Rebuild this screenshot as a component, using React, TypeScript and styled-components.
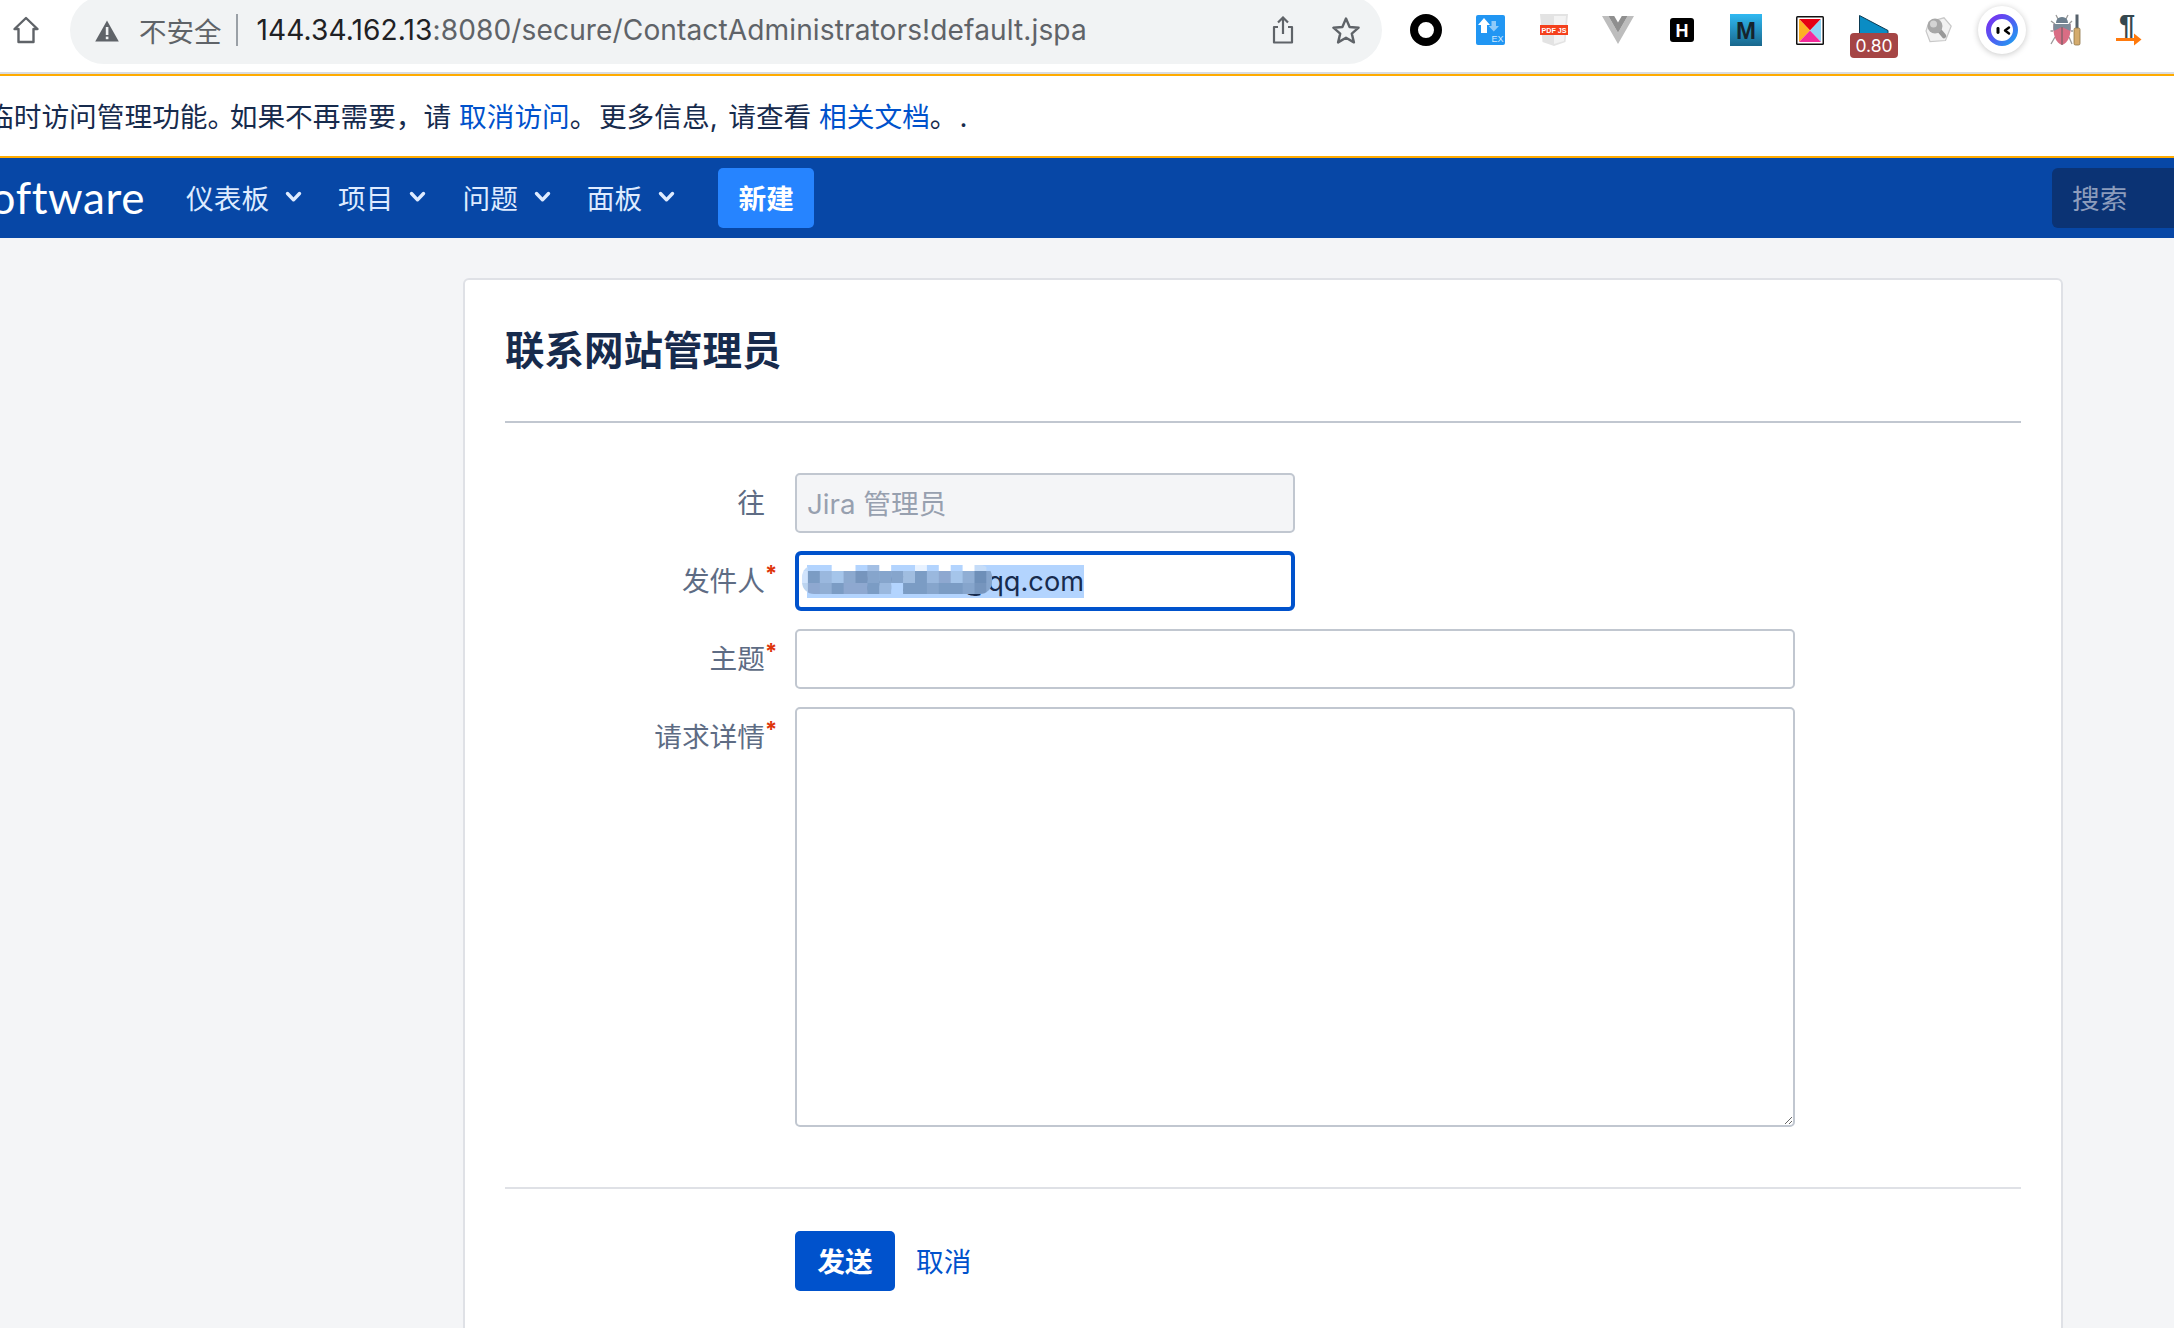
import React from "react";
import styled, { createGlobalStyle } from "styled-components";

const FONT = `Inter, "Noto Sans CJK SC", "Noto Sans", sans-serif`;

const Global = createGlobalStyle`
  html, body { margin: 0; padding: 0; background: #f4f5f7; }
  body { font-family: ${FONT}; font-size: 27.7px; color: #172b4d; overflow: hidden; }
  * { box-sizing: border-box; }
`;

const Page = styled.div`
  width: 2174px;
  height: 1328px;
  overflow: hidden;
  display: flex;
  flex-direction: column;
`;

const Toolbar = styled.div`
  flex: none;
  height: 74px;
  background: #fff;
  border-bottom: 2px solid #dadce0;
  display: flex;
  align-items: flex-start;
`;

const HomeSlot = styled.div`
  width: 70px;
  height: 60px;
  padding-left: 13px;
  display: flex;
  align-items: center;
`;

const Omnibox = styled.div`
  width: 1312px;
  height: 68px;
  margin-top: -4px;
  padding: 0 21px 0 25px;
  border-radius: 34px;
  background: #f1f3f4;
  display: flex;
  align-items: center;
`;

const WarningSlot = styled.span`
  display: flex;
  margin-top: 2px;
`;

const Insecure = styled.span`
  margin-left: 20px;
  font-size: 27.5px;
  color: #5f6368;
  white-space: nowrap;
`;

const Separator = styled.span`
  width: 2px;
  height: 32px;
  margin: 0 19px 0 14px;
  background: #9aa0a6;
`;

const Url = styled.span`
  font-size: 28.1px;
  letter-spacing: 0.1px;
  color: #5f6368;
  white-space: nowrap;
  flex: 1;
`;

const Host = styled.span`
  color: #202124;
`;

const OmniIcon = styled.span<{ $gap: number }>`
  display: flex;
  margin-left: ${(p) => p.$gap}px;
`;

const Extensions = styled.div`
  margin-left: 12px;
  display: flex;
  height: 60px;
`;

const Ext = styled.div`
  width: 64px;
  height: 60px;
  display: flex;
  align-items: center;
  justify-content: center;
  position: relative;
`;

const TriangleSlot = styled.span`
  display: flex;
  margin-bottom: 10px;
`;

const Badge = styled.span`
  position: absolute;
  left: 8px;
  top: 33px;
  width: 48px;
  height: 25px;
  border-radius: 4px;
  background: #a54545;
  color: #fff;
  font-size: 17.5px;
  line-height: 25px;
  text-align: center;
`;

const FaceBubble = styled.div`
  width: 48px;
  height: 48px;
  border-radius: 50%;
  background: #fff;
  box-shadow: 0 1px 6px rgba(0, 0, 0, 0.22);
  display: flex;
  align-items: center;
  justify-content: center;
`;

const Banner = styled.div`
  flex: none;
  height: 84px;
  background: #fff;
  border-top: 2px solid #ffab00;
  border-bottom: 2px solid #ffab00;
  display: flex;
  align-items: center;
  white-space: nowrap;
`;

const BannerText = styled.div`
  margin-left: -14px;
  padding-bottom: 3px;
  color: #172b4d;
`;

const Kern = styled.span<{ $by: number }>`
  letter-spacing: ${(p) => p.$by}px;
`;

const Link = styled.a`
  color: #0052cc;
  text-decoration: none;
`;

const Nav = styled.div`
  flex: none;
  height: 80px;
  background: #0747a6;
  display: flex;
  align-items: center;
`;

const Logo = styled.div`
  width: 145px;
  padding-bottom: 2px;
  overflow: hidden;
  display: flex;
  justify-content: flex-end;
  white-space: nowrap;
  color: #fff;
  font-family: Lato, sans-serif;
  font-size: 44px;
  letter-spacing: 0.6px;
`;

const NavItem = styled.div<{ $first?: boolean }>`
  margin-left: ${(p) => (p.$first ? 41 : 36)}px;
  padding-bottom: 3px;
  display: flex;
  align-items: center;
  gap: 16px;
  color: #deebff;
`;

const CreateButton = styled.div`
  margin-left: 43px;
  width: 96px;
  height: 60px;
  padding-bottom: 3px;
  border-radius: 5px;
  background: #2684ff;
  color: #fff;
  font-weight: 700;
  display: flex;
  align-items: center;
  justify-content: center;
`;

const Search = styled.div`
  margin-left: auto;
  width: 122px;
  height: 60px;
  padding: 0 0 2px 20px;
  border-radius: 6px 0 0 6px;
  background: #0b3374;
  color: #8c9cbc;
  display: flex;
  align-items: center;
`;

const Main = styled.div`
  flex: none;
  padding: 40px 0 0 463px;
`;

const Card = styled.div`
  width: 1600px;
  height: 1200px;
  padding: 41px 40px 40px;
  background: #fff;
  border: 2px solid #dfe1e6;
  border-radius: 6px;
`;

const Title = styled.h1`
  margin: 0;
  font-size: 39.5px;
  line-height: 60px;
  font-weight: 700;
  color: #172b4d;
`;

const Rule = styled.hr<{ $light?: boolean }>`
  margin: ${(p) => (p.$light ? 60 : 40)}px 0 0;
  height: 2px;
  border: 0;
  background: ${(p) => (p.$light ? "#dfe1e6" : "#c1c7d0")};
`;

const Form = styled.div`
  margin-top: 50px;
  display: flex;
  flex-direction: column;
  gap: 18px;
`;

const Row = styled.div`
  display: grid;
  grid-template-columns: 260px 1fr;
  column-gap: 30px;
  align-items: start;
`;

const Label = styled.label`
  justify-self: end;
  position: relative;
  line-height: 60px;
  color: #5e6c84;
`;

const Star = styled.span`
  position: absolute;
  left: 100%;
  top: -8px;
  color: #de350b;
  font-size: 22px;
  font-weight: 700;
`;

const TextField = styled.input<{ $width: number }>`
  display: block;
  width: ${(p) => p.$width}px;
  height: 60px;
  padding: 0 10px 3px;
  border: 2px solid #c1c7d0;
  border-radius: 5px;
  background: #fff;
  font: inherit;
  color: #172b4d;
  outline: none;
  &:disabled {
    background: #f4f5f7;
    color: #97a0af;
    opacity: 1;
  }
`;

const FocusedField = styled.div`
  position: relative;
  width: 500px;
  height: 60px;
  padding: 0 8px;
  border: 4px solid #0052cc;
  border-radius: 6px;
  display: flex;
  align-items: center;
`;

const Selection = styled.span`
  display: flex;
  justify-content: flex-end;
  width: 277px;
  height: 33px;
  overflow: hidden;
  white-space: nowrap;
  line-height: 33px;
  font-size: 27.2px;
  background: #b3d4fe;
  color: #172b4d;
`;

const SelectedValue = styled.span`
  flex: none;
`;

const Mosaic = styled.svg`
  position: absolute;
  left: 3px;
  top: 10px;
`;

const TextArea = styled.textarea`
  display: block;
  width: 1000px;
  height: 420px;
  padding: 8px 10px;
  border: 2px solid #c1c7d0;
  border-radius: 5px;
  background: #fff;
  font: inherit;
  outline: none;
  resize: vertical;
`;

const Actions = styled.div`
  margin-top: 42px;
  padding-left: 290px;
  display: flex;
  align-items: center;
`;

const SendButton = styled.button`
  width: 100px;
  height: 60px;
  padding: 0 0 3px;
  border: 0;
  border-radius: 5px;
  background: #0052cc;
  color: #fff;
  font: inherit;
  font-weight: 700;
`;

const CancelLink = styled(Link)`
  margin-left: 21px;
  padding-bottom: 3px;
`;

const Chevron = () => (
  <svg width="17" height="12" viewBox="0 0 17 12">
    <path d="M2.5 2.5 L8.5 8.8 L14.5 2.5" fill="none" stroke="#deebff" strokeWidth="3.4" strokeLinecap="round" strokeLinejoin="round" />
  </svg>
);

const HomeIcon = () => (
  <svg width="26" height="28" viewBox="0 0 26 28">
    <path d="M13 2 L24.5 13 H20.5 V26 H5.5 V13 H1.5 Z" fill="none" stroke="#5f6368" strokeWidth="2.4" strokeLinejoin="round" />
  </svg>
);

const WarningIcon = () => (
  <svg width="24" height="22" viewBox="0 0 24 22">
    <path d="M12 0.5 L23.8 21.5 H0.2 Z" fill="#5f6368" />
    <rect x="10.8" y="7" width="2.6" height="8" fill="#f1f3f4" />
    <rect x="10.8" y="16.6" width="2.6" height="2.6" fill="#f1f3f4" />
  </svg>
);

const ShareIcon = () => (
  <svg width="22" height="28" viewBox="0 0 22 28">
    <path d="M6 11 H2 V26.5 H20 V11 H16" fill="none" stroke="#5f6368" strokeWidth="2.2" strokeLinejoin="round" />
    <path d="M11 18 V2 M6 6.5 L11 1.5 L16 6.5" fill="none" stroke="#5f6368" strokeWidth="2.2" />
  </svg>
);

const StarIcon = () => (
  <svg width="30" height="28" viewBox="0 0 30 28">
    <path d="M15 2.5 L18.6 11 L27.6 11.7 L20.8 17.6 L22.9 26.4 L15 21.7 L7.1 26.4 L9.2 17.6 L2.4 11.7 L11.4 11 Z" fill="none" stroke="#5f6368" strokeWidth="2.4" strokeLinejoin="round" />
  </svg>
);

const RingIcon = () => (
  <svg width="32" height="32" viewBox="0 0 32 32">
    <circle cx="16" cy="16" r="12" fill="none" stroke="#000" strokeWidth="8" />
  </svg>
);

const ExIcon = () => (
  <svg width="29" height="30" viewBox="0 0 29 30">
    <rect width="29" height="30" rx="2" fill="#2196f3" />
    <path d="M8 3 L14 10 H11 V18 H5 V10 H2 Z" fill="#fff" />
    <path d="M15.5 6 H20 V11 H23 L17.8 16.5 L12.6 11 H15.5 Z" fill="#90caf9" />
    <text x="15.5" y="27" fontSize="9" fill="#cfe8fc" fontFamily="Liberation Sans, sans-serif">EX</text>
  </svg>
);

const PdfIcon = () => (
  <svg width="28" height="32" viewBox="0 0 28 32">
    <path d="M0 0 H28 L25.5 28 L14 32 L2.5 28 Z" fill="#e3e3e3" />
    <path d="M14 2 H26 L24 27 L14 30 Z" fill="#f3f3f3" />
    <rect y="11" width="28" height="10" fill="#f4401c" />
    <text x="14" y="18.7" fontSize="7.2" fontWeight="700" textAnchor="middle" fill="#fff" fontFamily="Liberation Sans, sans-serif">PDF JS</text>
  </svg>
);

const VueIcon = () => (
  <svg width="32" height="28" viewBox="0 0 32 28">
    <path d="M0 0 L16 28 L32 0 H25.6 L16 16.8 L6.4 0 Z" fill="#bdbdbd" />
    <path d="M6.4 0 L16 16.8 L25.6 0 H19.8 L16 6.6 L12.2 0 Z" fill="#8f8f8f" />
  </svg>
);

const HIcon = () => (
  <svg width="24" height="24" viewBox="0 0 24 24">
    <rect width="24" height="24" rx="3" fill="#000" />
    <text x="12" y="19" fontSize="18" fontWeight="700" textAnchor="middle" fill="#fff" fontFamily="Liberation Sans, sans-serif">H</text>
  </svg>
);

const MIcon = () => (
  <svg width="32" height="32" viewBox="0 0 32 32">
    <defs>
      <linearGradient id="mGrad" x1="0" y1="0" x2="0" y2="1">
        <stop offset="0" stopColor="#2fb9f2" />
        <stop offset="1" stopColor="#19678c" />
      </linearGradient>
    </defs>
    <rect width="32" height="32" fill="url(#mGrad)" />
    <text x="16" y="25" fontSize="24" fontWeight="700" textAnchor="middle" fill="#16242c" fontFamily="Liberation Sans, sans-serif">M</text>
  </svg>
);

const XIcon = () => (
  <svg width="28" height="29" viewBox="0 0 28 29">
    <rect width="28" height="29" fill="#111" rx="1.5" />
    <rect x="1.5" y="1.5" width="25" height="26" fill="#fff" />
    <path d="M3 3 H25 L14 14.5 Z" fill="#e60012" />
    <path d="M3 3 L14 14.5 L3 26 Z" fill="#fdb022" />
    <path d="M25 3 L14 14.5 L25 26 Z" fill="#8fd3f4" />
    <path d="M3 26 H25 L14 14.5 Z" fill="#f32a9b" />
  </svg>
);

const TriangleIcon = () => (
  <svg width="30" height="20" viewBox="0 0 30 20">
    <path d="M0.5 0.5 L29 15.5 L29 20 H0.5 Z" fill="#0a8cc4" stroke="#0b3a52" strokeWidth="1" />
  </svg>
);

const MagnifierIcon = () => (
  <svg width="27" height="26" viewBox="0 0 27 26">
    <path d="M4 5 L19 0.8 L26.2 9 L20.5 23.5 L5 24.5 L1 14 Z" fill="#f2f2f2" stroke="#c8c8c8" strokeWidth="1.2" />
    <path d="M14 13 L19 19" stroke="#999" strokeWidth="4.5" strokeLinecap="round" />
    <circle cx="10" cy="9" r="7.5" fill="#a8a8a8" />
    <circle cx="8.5" cy="7" r="3.5" fill="#d4d4d4" />
  </svg>
);

const FaceIcon = () => (
  <svg width="32" height="32" viewBox="0 0 32 32">
    <defs>
      <linearGradient id="faceGrad" x1="0" y1="0" x2="1" y2="1">
        <stop offset="0" stopColor="#7a2ff0" />
        <stop offset="0.55" stopColor="#4a63f2" />
        <stop offset="1" stopColor="#1fa0f0" />
      </linearGradient>
    </defs>
    <circle cx="16" cy="16" r="13.5" fill="#fff" stroke="url(#faceGrad)" strokeWidth="5" />
    <rect x="10.5" y="13" width="3" height="7" rx="1.4" fill="#000" />
    <path d="M23 13.5 L19 16.5 L23 19.5" fill="none" stroke="#000" strokeWidth="2.4" strokeLinecap="round" strokeLinejoin="round" />
  </svg>
);

const BugIcon = () => (
  <svg width="32" height="32" viewBox="0 0 32 32">
    <path d="M5 10 L1 7 M3 17 L0.5 17 M5 23 L1 30 M19 10 L22 7 M21 17 L23 17 M19 23 L22 30 M8 5 L6 1 M16 5 L18 1" stroke="#9a9a9a" strokeWidth="1.3" fill="none" />
    <path d="M12 3 C7 3 6 7 6 9 H18 C18 7 17 3 12 3 Z" fill="#6d7f8e" />
    <path d="M3.5 10 H20.5 C21.5 21 18 29 12 31 C6 29 2.5 21 3.5 10 Z" fill="#d96d84" />
    <path d="M3.5 10 H20.5 C20.8 13 20.7 15 20.3 17 L12 13 L3.7 17 C3.3 15 3.2 13 3.5 10 Z" fill="#7d8b99" />
    <path d="M12 13 V31" stroke="#5f5f5f" strokeWidth="1" />
    <rect x="25.5" y="0.5" width="3" height="14" fill="#56616b" />
    <rect x="24" y="14" width="6" height="17" rx="1.5" fill="#d4ab6d" stroke="#8d7446" strokeWidth="0.8" />
  </svg>
);

const PilcrowIcon = () => (
  <svg width="28" height="32" viewBox="0 0 28 32">
    <text x="11" y="21" fontSize="29" fontWeight="700" textAnchor="middle" fill="#35474f" fontFamily="Liberation Sans, sans-serif">¶</text>
    <path d="M0 25.5 H22" stroke="#ff7a0d" strokeWidth="3" />
    <path d="M18 19.5 L25.5 25.5 L18 31.5 Z" fill="#ff7a0d" />
  </svg>
);

const CELL = 11.9;
const OFFSET = -6;
const TOP_ROW = ["#c5dcf8", "#b3d4fe", "#b3d4fe", "#ffffff", "#ffffff", "#b3d4fe", "#a3bfe4", "#ffffff", "#b3d4fe", "#b3d4fe", "#e8f2ff", "#b3d4fe", "#ffffff", "#b3d4fe", "#ffffff", "#c5dcf8", "#b3d4fe"];
const MID_ROW = ["#d0e3fc", "#7b9cc4", "#9ab8de", "#a5c5ea", "#8ca9cf", "#7695bd", "#86a5cc", "#86a5cc", "#86a5cc", "#a0bde0", "#7b9cc4", "#9ab8de", "#8ea8d0", "#a5c5ea", "#90aed4", "#6e8fb8", "#86a5cc"];
const LOW_ROW = ["#bcd4f0", "#8ea8d0", "#90aed4", "#7b9cc4", "#8ea8d0", "#8ea8d0", "#7b9cc4", "#9ab8de", "#b3d4fe", "#7b9cc4", "#7b9cc4", "#86a5cc", "#7b9cc4", "#7b9cc4", "#86a5cc", "#7695bd", "#86a5cc"];

const BlurPatch = () => (
  <Mosaic width="190" height="29" viewBox="0 0 190 29">
    <defs>
      <clipPath id="patchClip">
        <rect width="190" height="29" rx="12" />
      </clipPath>
    </defs>
    <g clipPath="url(#patchClip)">
      {TOP_ROW.map((c, i) => (
        <rect key={`t${i}`} x={OFFSET + i * CELL} y="0" width={CELL + 0.5} height="6" fill={c} />
      ))}
      {MID_ROW.map((c, i) => (
        <rect key={`m${i}`} x={OFFSET + i * CELL} y="6" width={CELL + 0.5} height="12" fill={c} />
      ))}
      {LOW_ROW.map((c, i) => (
        <rect key={`l${i}`} x={OFFSET + i * CELL} y="18" width={CELL + 0.5} height="11" fill={c} />
      ))}
    </g>
  </Mosaic>
);

const navItems = ["仪表板", "项目", "问题", "面板"];

export default function App() {
  return (
    <Page>
      <Global />
      <Toolbar>
        <HomeSlot>
          <HomeIcon />
        </HomeSlot>
        <Omnibox>
          <WarningSlot>
            <WarningIcon />
          </WarningSlot>
          <Insecure>不安全</Insecure>
          <Separator />
          <Url>
            <Host>144.34.162.13</Host>:8080/secure/ContactAdministrators!default.jspa
          </Url>
          <OmniIcon $gap={0}>
            <ShareIcon />
          </OmniIcon>
          <OmniIcon $gap={37}>
            <StarIcon />
          </OmniIcon>
        </Omnibox>
        <Extensions>
          <Ext><RingIcon /></Ext>
          <Ext><ExIcon /></Ext>
          <Ext><PdfIcon /></Ext>
          <Ext><VueIcon /></Ext>
          <Ext><HIcon /></Ext>
          <Ext><MIcon /></Ext>
          <Ext><XIcon /></Ext>
          <Ext>
            <TriangleSlot>
              <TriangleIcon />
            </TriangleSlot>
            <Badge>0.80</Badge>
          </Ext>
          <Ext><MagnifierIcon /></Ext>
          <Ext>
            <FaceBubble><FaceIcon /></FaceBubble>
          </Ext>
          <Ext><BugIcon /></Ext>
          <Ext><PilcrowIcon /></Ext>
        </Extensions>
      </Toolbar>

      <Banner>
        <BannerText>
          临时访问管理功能<Kern $by={-5.5}>。</Kern>如果不再需要，请 <Link>取消访问</Link>
          <Kern $by={1.4}>。</Kern>更多信息<Kern $by={1.4}>, </Kern>请查看 <Link>相关文档</Link>
          <Kern $by={2}>。</Kern>.
        </BannerText>
      </Banner>

      <Nav>
        <Logo>Jira Software</Logo>
        {navItems.map((item, i) => (
          <NavItem key={item} $first={i === 0}>
            {item}
            <Chevron />
          </NavItem>
        ))}
        <CreateButton>新建</CreateButton>
        <Search>搜索</Search>
      </Nav>

      <Main>
        <Card>
          <Title>联系网站管理员</Title>
          <Rule />
          <Form>
            <Row>
              <Label>往</Label>
              <TextField $width={500} disabled value="Jira 管理员" readOnly />
            </Row>
            <Row>
              <Label>
                发件人<Star>*</Star>
              </Label>
              <FocusedField>
                <Selection>
                  <SelectedValue>xxxxxxxxxxxx@qq.com</SelectedValue>
                </Selection>
                <BlurPatch />
              </FocusedField>
            </Row>
            <Row>
              <Label>
                主题<Star>*</Star>
              </Label>
              <TextField $width={1000} />
            </Row>
            <Row>
              <Label>
                请求详情<Star>*</Star>
              </Label>
              <TextArea />
            </Row>
          </Form>
          <Rule $light />
          <Actions>
            <SendButton>发送</SendButton>
            <CancelLink>取消</CancelLink>
          </Actions>
        </Card>
      </Main>
    </Page>
  );
}
